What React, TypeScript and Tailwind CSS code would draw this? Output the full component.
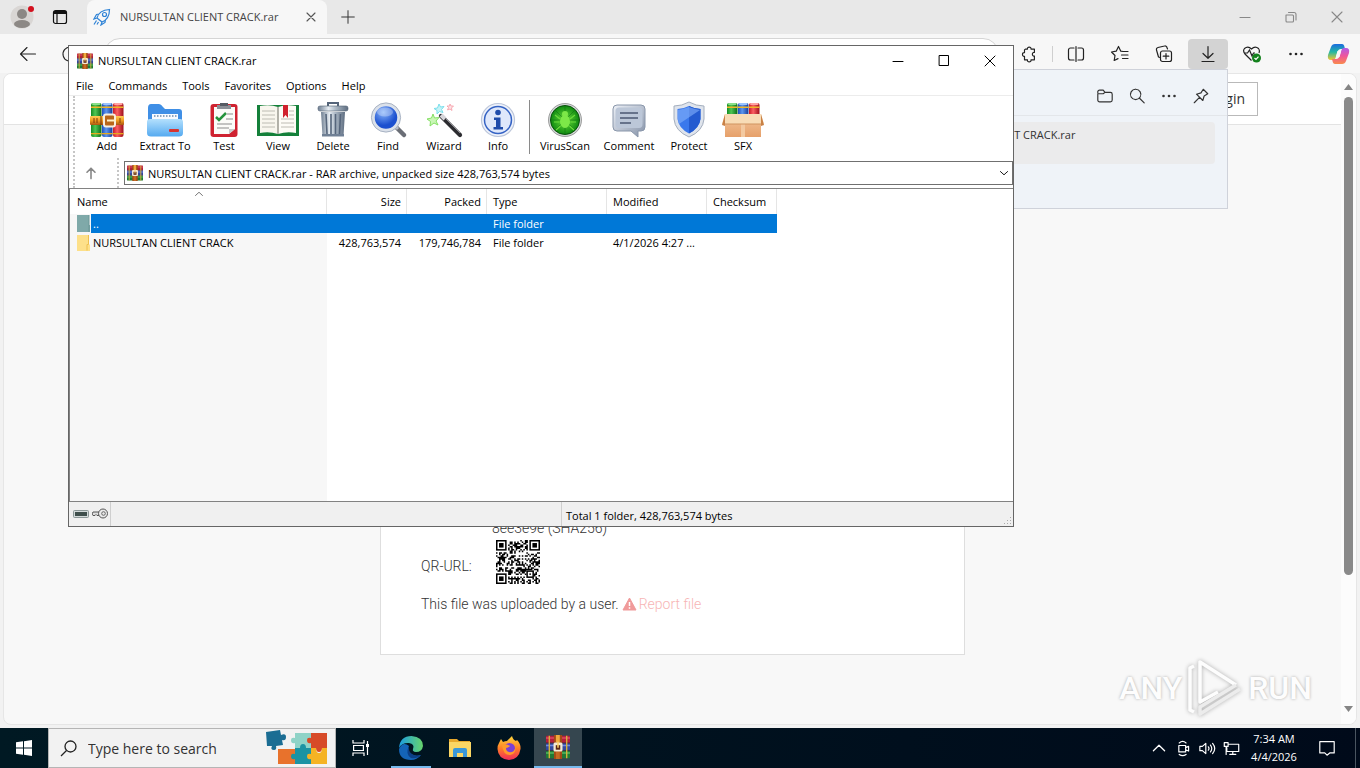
import { ReactNode } from 'react'

const FILE_NAME = 'NURSULTAN CLIENT CRACK.rar'

// Thin line icon on a 20x20 grid
function Line({ d, size = 20, className = '', w = 1.1 }: { d: string; size?: number; className?: string; w?: number }) {
    return (
        <svg width={size} height={size} viewBox="0 0 20 20" fill="none" stroke="currentColor" strokeWidth={w} strokeLinecap="round" strokeLinejoin="round" className={className} aria-hidden="true">
            <path d={d} />
        </svg>
    )
}

const PATHS = {
    close: 'M5 5 15 15M15 5 5 15',
    plus: 'M10 3V17M3 10H17',
    minus: 'M5 10.500H15',
    back: 'M17.500 10H2.500M9 3.500 2.500 10 9 16.500',
    refresh: 'M16 6.500A7 7 0 1 0 17 10M16.500 2.500V6.500H12.500',
    puzzle: 'M6 4.500H8.300C7.500 1.600 13 1.600 12.200 4.500H16V8.300C13 7.500 13 13 16 12.200V16.500H12.200C13 19.400 7.500 19.400 8.300 16.500H5V12.500C2 13.200 2 7.700 5 8.500V5.500Z',
    split: 'M8 4H4.500A2 2 0 0 0 2.500 6V14A2 2 0 0 0 4.500 16H8M12 4H15.500A2 2 0 0 1 17.500 6V14A2 2 0 0 1 15.500 16H12M10 2.500V17.500',
    star: 'M13 7.500 10.800 7.200 8.500 2.500 6.200 7.200 1.500 8 5 11.500 4.200 16.500 8 14.600M12.500 7.500H18M11.500 11H18M12.500 14.500H18',
    collections: 'M6 13.500 4.500 13 2.500 6A2 2 0 0 1 4 3.500L10.500 2A2 2 0 0 1 13 3.500L13.500 5M8.500 7H15.500A2 2 0 0 1 17.500 9V15.500A2 2 0 0 1 15.500 17.500H8.500A2 2 0 0 1 6.500 15.500V9A2 2 0 0 1 8.500 7M12 9.500V15M9.200 12.200H14.800',
    download: 'M10 2.500V14M5 9.500 10 14.300 15 9.500M4 17.500H16',
    folder: 'M2 6.500V5A2 2 0 0 1 4 3.500H8L10 6H16A2 2 0 0 1 18 8V14.500A2 2 0 0 1 16 16.500H4A2 2 0 0 1 2 14.500V7.500H8L10 6',
    search: 'M8.500 2.500A5.800 5.800 0 1 0 8.510 2.500M12.800 12.500 18 17.700',
    pin: 'M12.500 2.500 17.500 7.500 13.500 10 12 15 5 8 10 6.500ZM8.300 11.600 2.500 17.500',
    up: 'M10 17V4M5 9 10 4 15 9',
    down: 'M4 7.500 10 13 16 7.500',
    sort: 'M3 13 10 6.500 17 13',
}

function Dots() {
    return (
        <svg width="20" height="20" viewBox="0 0 20 20" fill="currentColor" aria-hidden="true">
            <circle cx="4.500" cy="10" r="1.300" />
            <circle cx="10" cy="10" r="1.300" />
            <circle cx="15.500" cy="10" r="1.300" />
        </svg>
    )
}

// Three stacked books tied with a belt
function RarIcon({ size = 16 }: { size?: number }) {
    return (
        <svg width={size} height={size} viewBox="0 0 16 16" aria-hidden="true">
            <rect width="16" height="5" y="0.500" rx="0.500" fill="#b3203c" />
            <rect width="16" height="1" y="1.500" fill="#dc4a62" />
            <rect width="16" height="5" y="5.500" fill="#3349a0" />
            <rect width="16" height="1" y="6.500" fill="#6f8ae0" />
            <rect width="16" height="5" y="10.500" rx="0.500" fill="#1f7a35" />
            <rect width="16" height="1" y="11.500" fill="#55b85f" />
            <path d="M0 5.300H16M0 10.300H16" stroke="#3c2a38" strokeWidth="0.500" />
            <path d="M2.200 0.500V15.500M13.800 0.500V15.500" stroke="#d9b23b" strokeWidth="0.900" />
            <rect x="5.300" width="5.400" height="16" fill="#a34a16" />
            <rect x="6.600" width="2.600" height="5" fill="#f0a93d" />
            <rect x="6.600" y="11" width="2.600" height="5" fill="#c46a22" />
            <rect x="5" y="5" width="6" height="6" rx="1" fill="#f4e9d2" />
            <rect x="6.500" y="6.800" width="3" height="3" fill="#5b2716" />
            <rect x="7.500" y="4.500" width="1" height="4" fill="#ffd46a" />
        </svg>
    )
}

function Books({ y = 0, h = 34 }: { y?: number; h?: number }) {
    const books = [
        ['url(#bookGreen)', '#8ae08a'],
        ['url(#bookBlue)', '#9cc4ff'],
        ['url(#bookRed)', '#ffa3a3'],
    ]
    return (
        <g>
            {books.map(([fill, shine], i) => (
                <g key={i} transform={`translate(${2 + i * 11} ${y})`}>
                    <rect width="10.500" height={h} rx="2" fill={fill} />
                    <rect x="1" width="8.500" height="2" rx="1" fill={shine} />
                    <rect y="3.500" width="10.500" height="1.500" fill="#f0b429" />
                    {h > 20 && <rect y={h - 4} width="10.500" height="1.300" fill="#e6a91f" />}
                </g>
            ))}
        </g>
    )
}

function Defs() {
    return (
        <svg width="0" height="0" className="absolute" aria-hidden="true">
            <defs>
                <linearGradient id="bookGreen"><stop offset="0" stopColor="#128b22" /><stop offset=".4" stopColor="#4fc653" /><stop offset="1" stopColor="#0c6a19" /></linearGradient>
                <linearGradient id="bookBlue"><stop offset="0" stopColor="#1e4fbd" /><stop offset=".4" stopColor="#5d97ee" /><stop offset="1" stopColor="#173c99" /></linearGradient>
                <linearGradient id="bookRed"><stop offset="0" stopColor="#c81a26" /><stop offset=".4" stopColor="#fa5f63" /><stop offset="1" stopColor="#9e0f1c" /></linearGradient>
                <linearGradient id="gold" x2="0" y2="1"><stop offset="0" stopColor="#ffcf57" /><stop offset=".5" stopColor="#ef9a22" /><stop offset="1" stopColor="#a85510" /></linearGradient>
                <linearGradient id="sky" x2="0" y2="1"><stop offset="0" stopColor="#b4e0fd" /><stop offset="1" stopColor="#55aaf0" /></linearGradient>
                <linearGradient id="steel"><stop offset="0" stopColor="#6f7f92" /><stop offset=".35" stopColor="#e6ecf2" /><stop offset=".6" stopColor="#aab7c4" /><stop offset="1" stopColor="#5e6d80" /></linearGradient>
                <radialGradient id="lens" cx=".4" cy=".3"><stop offset="0" stopColor="#86b4fb" /><stop offset="1" stopColor="#1c50cf" /></radialGradient>
                <radialGradient id="radar"><stop offset="0" stopColor="#6fe03d" /><stop offset="1" stopColor="#0e8a10" /></radialGradient>
                <linearGradient id="silver" x2="1" y2="1"><stop offset="0" stopColor="#eef2f8" /><stop offset="1" stopColor="#8592a8" /></linearGradient>
                <linearGradient id="box" x2="0" y2="1"><stop offset="0" stopColor="#f3c79d" /><stop offset="1" stopColor="#e6a06a" /></linearGradient>
                <linearGradient id="edgeTop"><stop offset="0" stopColor="#1b9de2" /><stop offset="1" stopColor="#67d56b" /></linearGradient>
                <linearGradient id="fox" x2="0" y2="1"><stop offset="0" stopColor="#ffd83c" /><stop offset=".5" stopColor="#ff7f26" /><stop offset="1" stopColor="#f02c5a" /></linearGradient>
                <linearGradient id="copA" x2="0" y2="1"><stop offset="0" stopColor="#1a6be0" /><stop offset=".5" stopColor="#23b8a2" /><stop offset="1" stopColor="#f5c52f" /></linearGradient>
                <linearGradient id="copB" x2="0" y2="1"><stop offset="0" stopColor="#b05be8" /><stop offset=".5" stopColor="#f0569a" /><stop offset="1" stopColor="#f98b4c" /></linearGradient>
            </defs>
        </svg>
    )
}

const TOOL_ICONS: Record<string, ReactNode> = {
    Add: (
        <>
            <Books y={1} />
            <rect x="1" y="14" width="34" height="9" rx="1" fill="url(#gold)" />
            <path d="M12 14V23M24 14V23" stroke="#6e3208" strokeWidth="1" />
            <rect x="15" y="12.500" width="11" height="12" rx="2" fill="#b8661a" stroke="#f7efe0" strokeWidth="2" />
            <path d="M18 18.500H27" stroke="#fff1c5" strokeWidth="2" />
            <path d="M5 16V21M8 16V21M31 16V21" stroke="#7d3d09" />
        </>
    ),
    'Extract To': (
        <>
            <path d="M1 6Q1 2 4 2H12Q14 2 16 5L18 7H32Q35 7 35 10V28H1Z" fill="#3f8fe6" />
            <path d="M5 12H31V22H5Z" fill="#f8fbff" />
            <path d="M7 14H30" stroke="#8fa6c0" strokeWidth="2" strokeDasharray="1.500 1.500" />
            <path d="M0 20Q0 17 3 17H33Q36 17 36 20V31Q36 34.500 32 34.500H4Q0 34.500 0 31Z" fill="url(#sky)" />
            <rect x="22" y="27" width="10" height="3" rx="1" fill="#d8342f" />
        </>
    ),
    Test: (
        <>
            <rect x="4.500" y="2" width="27" height="33" rx="3" fill="#cf2230" />
            <path d="M8 5H29V27L23 32H8Z" fill="#fbfbf8" />
            <path d="M29 27H23V32Z" fill="#c9c9c9" />
            <path d="M11 3H25V7H11Z" fill="#8a8f96" />
            <path d="M14 1H22V4H14Z" fill="#555b63" />
            <path d="M10 15 13 18 20 11" fill="none" stroke="#25933c" strokeWidth="2.500" />
            <path d="M21 12H27M20 17H27M11 22H26M11 26H23" stroke="#8b8b8b" />
        </>
    ),
    View: (
        <>
            <path d="M-3 3H39V34H-3Z" fill="#14803a" />
            <path d="M0 4Q10 2 18 5V32Q9 29 0 31Z" fill="#f8f6ee" />
            <path d="M36 4Q26 2 18 5V32Q27 29 36 31Z" fill="#fdfcf6" />
            <path d="M18 5V32" stroke="#9a9a90" strokeWidth="1.500" />
            <path d="M2 9H15M2 13H15M2 17H15M2 21H15M2 25H15M21 17H34M21 21H34M21 25H34M29 9H34M29 13H34" stroke="#b7b5ac" strokeWidth="0.900" />
            <path d="M23 3H28V16L25.500 13 23 16Z" fill="#d0212d" />
        </>
    ),
    Delete: (
        <>
            <path d="M13 4V1H23V4" fill="none" stroke="#55657a" strokeWidth="2" />
            <rect x="3" y="4" width="30" height="5" rx="2" fill="url(#steel)" stroke="#536173" strokeWidth=".6" />
            <path d="M6 10H30L28.500 34H7.500Z" fill="url(#steel)" />
            <path d="M11 12 12 32M16 12V32M20.500 12V32M25.500 12 24.500 32" stroke="#56667c" strokeWidth="1.600" />
            <path d="M7 32H29V34.500H7Z" fill="#708095" />
        </>
    ),
    Find: (
        <>
            <path d="M26 25 34 33" stroke="#6a6e76" strokeWidth="4.500" strokeLinecap="round" />
            <path d="M24 23 28 27" stroke="#b7bcc6" strokeWidth="3" />
            <circle cx="16" cy="15.500" r="13" fill="url(#lens)" stroke="#dbe1ea" strokeWidth="3.500" />
            <circle cx="16" cy="15.500" r="14.600" fill="none" stroke="#8f9cb0" strokeWidth=".7" />
            <ellipse cx="15" cy="10" rx="8" ry="4.500" fill="#fff" opacity=".3" />
        </>
    ),
    Wizard: (
        <>
            <path d="M15 14 34 33" stroke="#2c2c30" strokeWidth="4.200" strokeLinecap="round" />
            <path d="M15 13 19 17" stroke="#d6d6da" strokeWidth="4" />
            <path d="M20 17 34 31" stroke="#8a8a90" strokeWidth="1" />
            <path d="M7 12 8.500 16 13 15.500 10 19 12 23 8 21 4 24 4.500 19.500 1 17 5.500 16Z" fill="#c9f7b5" stroke="#86e065" />
            <path d="M13 2 14.500 5 18 4.500 15.500 7.500 17 10.500 13.500 9.500 11 12 11 8.500 8 6.500 11.500 6Z" fill="#c6f3f7" stroke="#7adfec" />
            <path d="M24 2 25 4 27.500 4 25.500 6 26 8.500 24 7 21.500 8 22.500 5.500 21 4 23.500 4Z" fill="#ffe1e4" stroke="#f59aa4" strokeWidth=".8" />
        </>
    ),
    Info: (
        <>
            <circle cx="18" cy="18" r="16.500" fill="#eef2fb" stroke="#bcc6da" strokeWidth="1.200" />
            <circle cx="18" cy="18" r="13.500" fill="#dfe8fb" stroke="#3563c4" strokeWidth="1.500" />
            <circle cx="18" cy="10.500" r="2.800" fill="#1f4cab" />
            <path d="M14 15.500H20.500V25H23V27.500H13.500V25H16V18H14Z" fill="#1f4cab" />
        </>
    ),
    VirusScan: (
        <>
            <circle cx="18" cy="18" r="16.500" fill="#d3d7d7" stroke="#8a8a8a" strokeWidth=".8" />
            <circle cx="18" cy="18" r="14.500" fill="url(#radar)" stroke="#0a4f0c" />
            <path d="M18 4V32M4 18H32M8 8 28 28M28 8 8 28" stroke="#0d6a10" strokeWidth=".7" opacity=".7" />
            <ellipse cx="18" cy="19.500" rx="5" ry="6.500" fill="#7de848" />
            <circle cx="18" cy="12" r="3" fill="#7de848" />
            <path d="M13 17 8 13M12.500 20H7M13.500 24 9 28M23 17 28 13M23.500 20H29M22.500 24 27 28" stroke="#6cdc3c" strokeWidth="1.200" />
        </>
    ),
    Comment: (
        <>
            <path d="M6 3H30Q34 3 34 7V25Q34 29 30 29H27V35L20 29H6Q2 29 2 25V7Q2 3 6 3Z" fill="url(#silver)" stroke="#8996aa" />
            <path d="M8 5.500H28Q31.500 5.500 31.500 9V22Q31.500 26 28 26H8Q4.500 26 4.500 22V9Q4.500 5.500 8 5.500Z" fill="#bcc7d8" />
            <path d="M9 11H27M9 16H27M9 21H20" stroke="#4b5872" strokeWidth="1.500" />
        </>
    ),
    Protect: (
        <>
            <path d="M18 0Q25 4 33 4V17Q32 29 18 35Q4 29 3 17V4Q11 4 18 0Z" fill="#dfe4ec" stroke="#a3aebe" />
            <path d="M18 4Q24 7 29.500 7V17Q28.500 26 18 31.500Q7.500 26 6.500 17V7Q12 7 18 4Z" fill="#3a78ec" />
            <path d="M18 4Q24 7 29.500 7V17Q28.500 26 18 31.500Z" fill="#245bd0" />
            <path d="M7 8Q13 7 18 5Q23 7 29 8L8 22Q6.500 18 7 8Z" fill="#84b1fc" opacity=".6" />
        </>
    ),
    SFX: (
        <>
            <Books y={1} h={14} />
            <path d="M0 12H36V35H0Z" fill="url(#box)" />
            <path d="M0 12-3 22H39L36 12Z" fill="#f8dcb6" />
            <path d="M0 12-3 23 0 24ZM36 12 39 23 36 24Z" fill="#c98146" />
            <path d="M16 22H20V35H16Z" fill="#f3c9a0" />
            <path d="M0 22H36" stroke="#d09460" />
        </>
    ),
}

const TOOLS = [
    { label: 'Add', width: 'w-[52px]' },
    { label: 'Extract To', width: 'w-[64px]' },
    { label: 'Test', width: 'w-[54px]' },
    { label: 'View', width: 'w-[54px]' },
    { label: 'Delete', width: 'w-[56px]' },
    { label: 'Find', width: 'w-[54px]' },
    { label: 'Wizard', width: 'w-[58px]' },
    { label: 'Info', width: 'w-[50px]' },
]

const EXTRA_TOOLS = [
    { label: 'VirusScan', width: 'w-[64px]' },
    { label: 'Comment', width: 'w-[64px]' },
    { label: 'Protect', width: 'w-[56px]' },
    { label: 'SFX', width: 'w-[52px]' },
]

function ToolButton({ label, width }: { label: string; width: string }) {
    return (
        <button className={`flex flex-col items-center whitespace-nowrap pt-1.5 ${width}`}>
            <svg width="36" height="36" viewBox="0 0 36 36" className="overflow-visible" aria-hidden="true">{TOOL_ICONS[label]}</svg>
            <span className="leading-4">{label}</span>
        </button>
    )
}

function TabStrip() {
    return (
        <div className="flex h-[34px] shrink-0 items-center bg-[#e8e8e8]">
            <button aria-label="Profile" className="ml-2.5 w-6">
                <svg width="24" height="24" viewBox="0 0 24 24">
                    <circle cx="12" cy="12" r="11.500" fill="#d9d6d4" />
                    <circle cx="12" cy="9" r="5" fill="#8c8885" />
                    <ellipse cx="12" cy="19" rx="8" ry="4" fill="#8c8885" />
                    <circle cx="21" cy="4" r="3" fill="#d3111f" />
                </svg>
            </button>
            <button aria-label="Tab actions" className="ml-[18px] w-4">
                <svg width="16" height="16" viewBox="0 0 16 16" fill="none" stroke="#111" strokeWidth="1.200">
                    <rect x="1.500" y="1.500" width="13" height="13" rx="2" />
                    <path d="M1.500 4.500H14.500M5 4.500V14.500" />
                    <path d="M2 3H14" strokeWidth="2" />
                </svg>
            </button>
            <div className="ml-[19px] flex h-full w-60 items-center rounded-t-lg bg-[#f7f7f7] pl-1.5 pr-2">
                <svg width="18" height="18" viewBox="0 0 18 18" fill="none" stroke="#2f83d6" strokeWidth="1.200">
                    <path d="M4 10Q6 2 16.500 1.500Q16.500 11 9 14ZM4 10 1 11 3.500 6.500 6 6M9 14 8 17 12 14.500 12.500 11.500M3.500 12.500 1 16.500M5.500 14 4 16.500" />
                    <circle cx="11.500" cy="6.500" r="2" />
                </svg>
                <span className="ml-[9px] flex-1 whitespace-nowrap text-[#444]">{FILE_NAME}</span>
                <button aria-label="Close tab" className="text-[#555]"><Line d={PATHS.close} size={16} w={1.4} /></button>
            </div>
            <button aria-label="New tab" className="ml-3 text-[#333]"><Line d={PATHS.plus} size={18} /></button>
            <div className="ml-auto flex text-[#888]">
                <button aria-label="Minimize browser" className="flex w-[46px] justify-center"><Line d={PATHS.minus} /></button>
                <button aria-label="Restore browser" className="flex w-[46px] justify-center">
                    <Line d="M5 8H11.500A1 1 0 0 1 12.500 9V14A1 1 0 0 1 11.500 15H6A1 1 0 0 1 5 14ZM7.500 5.500H13Q15 5.500 15 7.500V13" />
                </button>
                <button aria-label="Close browser" className="flex w-[46px] justify-center"><Line d={PATHS.close} /></button>
            </div>
        </div>
    )
}

function BarButton({ label, children, active = false }: { label: string; children: ReactNode; active?: boolean }) {
    return (
        <button aria-label={label} className={`flex h-[30px] w-10 shrink-0 items-center justify-center rounded-sm ${active ? 'bg-[#d3d3d3]' : ''}`}>
            {children}
        </button>
    )
}

function BrowserBar() {
    return (
        <div className="flex h-[39px] shrink-0 items-center bg-[#f7f7f7] pr-1 text-[#222]">
            <div className="flex gap-0.5 pl-2">
                <BarButton label="Back"><Line d={PATHS.back} /></BarButton>
                <BarButton label="Refresh"><Line d={PATHS.refresh} /></BarButton>
            </div>
            <input aria-label="Address" className="ml-3.5 h-8 min-w-0 flex-1 rounded-full border border-[#d5d5d5] bg-white px-4" />
            <div className="ml-2.5 flex items-center gap-1">
                <BarButton label="Extensions"><Line d={PATHS.puzzle} size={18} w={1.3} /></BarButton>
                <div className="-ml-px -mr-px h-4 w-px bg-[#cfcfcf]" />
                <BarButton label="Split screen"><Line d={PATHS.split} w={1.2} /></BarButton>
                <BarButton label="Favorites"><Line d={PATHS.star} w={1.2} /></BarButton>
                <BarButton label="Collections"><Line d={PATHS.collections} w={1.2} /></BarButton>
                <BarButton label="Downloads" active><Line d={PATHS.download} w={1.2} /></BarButton>
                <BarButton label="Browser essentials">
                    <svg width="20" height="20" viewBox="0 0 20 20" fill="none" stroke="currentColor" strokeWidth="1.200">
                        <path d="M9.500 16.500 3 10Q.5 7 2.500 4.500Q6 1.500 9.500 5Q13 1.500 16.500 4.500Q18 6.500 17 9M2 9H5.500L7.500 6 10 12 11.500 9H13" />
                        <circle cx="14.500" cy="14" r="4.500" fill="#13811c" stroke="none" />
                        <path d="M12.500 14 14 15.500 16.500 12.700" stroke="#fff" />
                    </svg>
                </BarButton>
                <BarButton label="Settings and more"><Dots /></BarButton>
                <button aria-label="Copilot" className="flex w-9 justify-center">
                    <svg width="23" height="22" viewBox="0 0 23 22">
                        <path d="M8 1H15Q17 1 17.500 4L18 6H14Q11 6 10 10L8.500 15Q8 17 6 17H4Q0 17 1 12L4 4Q5 1 8 1Z" fill="url(#copA)" />
                        <path d="M15 21H8Q6 21 5.500 18L5 16H9Q12 16 13 12L14.500 7Q15 5 17 5H19Q23 5 22 10L19 18Q18 21 15 21Z" fill="url(#copB)" />
                        <path d="M10.500 8H14L12.500 14H9Z" fill="#f7f7f7" />
                    </svg>
                </button>
            </div>
        </div>
    )
}

function QrCode() {
    const n = 29
    const cells: string[] = []
    let seed = 41
    const inFinder = (x: number, y: number) => (x < 8 && y < 8) || (x > n - 9 && y < 8) || (x < 8 && y > n - 9)
    for (let y = 0; y < n; y++) {
        for (let x = 0; x < n; x++) {
            seed = (seed * 1103515245 + 12345) % 2147483648
            const align = x > 19 && x < 25 && y > 19 && y < 25
            if (!inFinder(x, y) && !align && (seed >> 12) % 2) cells.push(`M${x} ${y}h1v1h-1z`)
        }
    }
    const corners = [[0, 0], [n - 7, 0], [0, n - 7]]
    return (
        <svg width="44" height="44" viewBox={`0 0 ${n} ${n}`} role="img" aria-label="QR code">
            <path d={cells.join('')} fill="#000" />
            {corners.map(([x, y]) => (
                <g key={`${x}-${y}`}>
                    <rect x={x + 0.5} y={y + 0.5} width="6" height="6" fill="#fff" stroke="#000" />
                    <rect x={x + 2} y={y + 2} width="3" height="3" />
                </g>
            ))}
            <rect x="20.500" y="20.500" width="4" height="4" fill="#fff" stroke="#000" />
            <rect x="22" y="22" width="1" height="1" />
        </svg>
    )
}

function WebPage() {
    return (
        <div className="mx-[3px] mb-[3px] flex min-h-0 flex-1 overflow-hidden rounded-lg border border-[#e6e6e6] bg-[#f8f8f8]">
            <div className="flex min-w-0 flex-1 flex-col">
                <header className="flex h-[51px] shrink-0 items-center justify-end border-b border-[#e3e3e3] bg-white pr-[83px]">
                    <a href="#login" className="border border-[#b9b9b9] px-3 py-1.5 text-sm leading-5 text-[#333]">Login</a>
                </header>
                <main className="mx-auto mb-[69px] mt-6 flex min-h-0 w-[585px] flex-1 flex-col justify-end border border-[#dedede] bg-white px-10 pb-[38px] font-['Roboto',sans-serif] text-sm font-light leading-6 text-[#333]">
                    <div className="pl-[71px]">8ee3e9e (SHA256)</div>
                    <div className="flex items-end gap-6">
                        <span className="pb-1.5">QR-URL:</span>
                        <QrCode />
                    </div>
                    <p className="mt-2 flex items-center">
                        This file was uploaded by a user.
                        <a href="#report" className="ml-[3px] flex items-center gap-0.5 text-[#f7b5b5]">
                            <svg width="15" height="14" viewBox="0 0 15 14" aria-hidden="true">
                                <path d="M7.500 1 14 13H1Z" fill="#f09a9a" stroke="#f09a9a" strokeLinejoin="round" />
                                <path d="M7.500 5V9M7.500 10.300V11.700" stroke="#fff" strokeWidth="1.500" />
                            </svg>
                            Report file
                        </a>
                    </p>
                </main>
            </div>
            <div className="flex w-[15px] flex-col items-center bg-[#fcfcfc] pb-3 pt-2.5">
                <svg width="9" height="6" viewBox="0 0 9 6" fill="#858585"><path d="M0 6 4.500 0 9 6Z" /></svg>
                <div className="mb-1 mt-[7px] flex w-full flex-1 justify-center">
                    <div className="h-[79%] w-[9px] rounded-full bg-[#8a8a8a]" />
                </div>
                <svg width="9" height="6" viewBox="0 0 9 6" fill="#858585"><path d="M0 0 4.500 6 9 0Z" /></svg>
            </div>
        </div>
    )
}

function DownloadsFlyout() {
    return (
        <div className="absolute right-[132px] top-[69px] flex h-[140px] w-[364px] flex-col border border-[#cfd2da] bg-[#eff3f8]">
            <div className="flex h-[46px] items-center justify-end border-b border-[#e3e6ea] pr-2.5 pt-1.5 text-[#333]">
                <button aria-label="Open downloads folder" className="flex w-8 justify-center"><Line d={PATHS.folder} size={18} w={1.3} /></button>
                <button aria-label="Search downloads" className="flex w-8 justify-center"><Line d={PATHS.search} size={18} w={1.3} /></button>
                <button aria-label="More options" className="flex w-8 justify-center"><Dots /></button>
                <button aria-label="Pin downloads" className="flex w-8 justify-center"><Line d={PATHS.pin} size={18} w={1.3} /></button>
            </div>
            <div className="mx-3 mt-1.5 h-[42px] rounded-sm bg-[#ebebec] pl-10 pt-[5px] text-[#333]">{FILE_NAME}</div>
        </div>
    )
}

const COLUMNS = ['Name', 'Size', 'Packed', 'Type', 'Modified', 'Checksum']

function FileTable() {
    return (
        <table className="w-[707px] table-fixed border-separate border-spacing-0 text-left">
            <colgroup>
                <col className="w-[257px]" />
                <col className="w-[80px]" />
                <col className="w-[80px]" />
                <col className="w-[120px]" />
                <col className="w-[100px]" />
                <col className="w-[70px]" />
            </colgroup>
            <thead>
                <tr className="h-[25px] bg-white">
                    {COLUMNS.map((c, i) => (
                        <th key={c} className={`relative border-r border-[#e5e5e5] p-0 font-normal ${i === 0 ? 'pl-[7px]' : 'pl-1.5'} ${i === 1 || i === 2 ? 'pr-[5px] text-right' : ''}`}>
                            {c}
                            {i === 0 && <Line d={PATHS.sort} size={10} w={2} className="absolute left-1/2 top-0 -ml-1 text-[#777]" />}
                        </th>
                    ))}
                </tr>
            </thead>
            <tbody>
                <tr className="h-[19px] text-white">
                    <td className="bg-[linear-gradient(to_right,transparent_21px,#0078d7_21px)] p-0">
                        <div className="flex items-center pl-[7px]">
                            <svg width="14" height="17" viewBox="0 0 14 17"><path d="M0 0H12V10H13V17H0Z" fill="#7fa9a9" /><path d="M12 0V17" stroke="#6b9696" /></svg>
                            <span className="pl-0.5">..</span>
                        </div>
                    </td>
                    <td className="bg-[#0078d7]" />
                    <td className="bg-[#0078d7]" />
                    <td className="bg-[#0078d7] p-0 pl-1.5">File folder</td>
                    <td className="bg-[#0078d7]" />
                    <td className="bg-[#0078d7]" />
                </tr>
                <tr className="h-[19px]">
                    <td className="p-0">
                        <div className="flex items-center pl-[7px]">
                            <svg width="14" height="16" viewBox="0 0 14 16"><path d="M0 0H12V9L13 10V16H0Z" fill="#fde08a" /><path d="M11.500 0V9.500H10V15.500" fill="none" stroke="#eec04f" /></svg>
                            <span className="pl-0.5">NURSULTAN CLIENT CRACK</span>
                        </div>
                    </td>
                    <td className="p-0 pr-1.5 text-right">428,763,574</td>
                    <td className="p-0 pr-1.5 text-right">179,746,784</td>
                    <td className="p-0 pl-1.5">File folder</td>
                    <td className="whitespace-nowrap p-0 pl-1.5">4/1/2026 4:27 ...</td>
                    <td />
                </tr>
            </tbody>
        </table>
    )
}

function ArchiveWindow() {
    return (
        <section className="absolute bottom-[241px] left-[68px] right-[346px] top-[45px] flex flex-col border border-[#666] bg-white text-black">
            <div className="flex h-[30px] shrink-0 items-center pl-2">
                <RarIcon />
                <h1 className="ml-[5px] flex-1">{FILE_NAME}</h1>
                <button aria-label="Minimize" className="flex w-[46px] justify-center"><Line d={PATHS.minus} w={1} /></button>
                <button aria-label="Maximize" className="flex w-[46px] justify-center"><Line d="M5.500 4.500H14.500V14.500H5.500Z" w={1} /></button>
                <button aria-label="Close" className="flex w-[46px] justify-center"><Line d={PATHS.close} w={1} /></button>
            </div>
            <nav className="flex h-5 shrink-0 items-center gap-px border-b border-[#ececec]">
                {['File', 'Commands', 'Tools', 'Favorites', 'Options', 'Help'].map((m) => (
                    <button key={m} className="px-[7px]">{m}</button>
                ))}
            </nav>
            <div className="flex shrink-0 pl-1">
                <div className="w-2 border-l-2 border-dotted border-[#c6c6c6]" />
                <div className="flex min-w-0 flex-1 flex-col">
                    <div className="flex h-[62px]">
                        {TOOLS.map((t) => <ToolButton key={t.label} {...t} />)}
                        <div className="mb-1 ml-1.5 mr-[3px] mt-1 w-px bg-[#8a8a8a]" />
                        {EXTRA_TOOLS.map((t) => <ToolButton key={t.label} {...t} />)}
                    </div>
                    <div className="flex h-[30px] items-center">
                        <button aria-label="Up one level" className="w-9 text-[#888]"><Line d={PATHS.up} size={16} w={2} className="ml-0.5" /></button>
                        <div className="h-full w-[7px] border-l-2 border-dotted border-[#c6c6c6]" />
                        <div className="relative h-6 flex-1">
                            <select aria-label="Archive path" className="h-full w-full appearance-none border border-[#707070] bg-white pl-[23px] pt-px">
                                <option>{FILE_NAME} - RAR archive, unpacked size 428,763,574 bytes</option>
                            </select>
                            <div className="pointer-events-none absolute inset-0 flex items-center justify-between px-[3px]">
                                <RarIcon />
                                <Line d={PATHS.down} size={12} w={1.5} />
                            </div>
                        </div>
                    </div>
                </div>
            </div>
            <div className="min-h-0 flex-1 border-b border-l border-t border-[#828282] bg-[linear-gradient(to_right,#f7f7f7_257px,white_257px)]">
                <div className="bg-[linear-gradient(white,white)] bg-[length:100%_25px] bg-no-repeat">
                    <FileTable />
                </div>
            </div>
            <footer className="flex h-6 shrink-0 items-center bg-[#f0f0f0]">
                <div className="flex h-full w-[42px] items-center gap-[3px] border-r border-[#cfcfcf] pl-1">
                    <svg width="16" height="8" viewBox="0 0 16 8"><rect x=".5" y=".5" width="15" height="7" rx="1" fill="#d3dada" stroke="#8b9797" /><rect x="2" y="2" width="12" height="4" fill="#3f4f4c" /></svg>
                    <svg width="16" height="12" viewBox="0 0 16 12" fill="none"><path d="M8 4H1L0 6 1 7.500H3L4 6.500 5 7.500H8" fill="#ddd" stroke="#555" /><circle cx="11" cy="5.500" r="4.500" fill="#e9e9e9" stroke="#555" /><circle cx="11.500" cy="5.500" r="1.800" stroke="#666" /></svg>
                </div>
                <div className="h-full w-[451px] border-r border-[#cfcfcf]" />
                <span className="flex-1 pl-1 pt-1">Total 1 folder, 428,763,574 bytes</span>
                <svg width="10" height="10" viewBox="0 0 10 10" fill="#aaa" className="self-end"><path d="M7 1h1v1H7zM4 4h1v1H4zM7 4h1v1H7zM1 7h1v1H1zM4 7h1v1H4zM7 7h1v1H7z" /></svg>
            </footer>
        </section>
    )
}

function Watermark() {
    return (
        <div className="pointer-events-none absolute bottom-12 right-12 flex items-center gap-1 font-['Roboto',sans-serif] text-[32px] font-medium leading-[64px] text-[#fdfdfd] [text-shadow:0_0_3px_#aaa]">
            <span>ANY</span>
            <svg width="58" height="64" viewBox="0 0 58 64" fill="none" stroke="#fdfdfd" strokeWidth="3.500" strokeLinejoin="round" className="drop-shadow-[0_0_2px_#aaa]">
                <path d="M50 29 14 6V46L32 36" />
                <path d="M8 10 4 12V54L8 56" />
                <path d="M54 33 14 58V51L50 29" stroke="#ececec" />
            </svg>
            <span>RUN</span>
        </div>
    )
}

function Puzzle() {
    return (
        <svg width="64" height="38" viewBox="0 0 64 38" aria-hidden="true">
            <path d="M1 3 15 1 16 6Q21 4 21 8Q21 12 17 11L18 16 11 17Q12 21 9 21Q5 21 7 17L2 17Z" fill="#1b6d93" />
            <path d="M30 4H46V19H30V14Q26 15 26 11Q26 8 30 9Z" fill="#8fd3c7" />
            <path d="M46 4H62V19H57Q57 23 54 23Q51 23 51 19H46V14Q42 15 42 11Q42 8 46 9Z" fill="#d74a28" />
            <path d="M13 20H30V35H13Z" fill="#e8722c" />
            <path d="M30 19H35Q35 15 38 15Q41 15 41 19H46V35H30V30Q26 31 26 27Q26 24 30 25Z" fill="#1b93a3" />
            <path d="M46 19H51Q51 24 54 24Q57 24 57 19H62V35H46V30Q42 31 42 27Q42 24 46 25Z" fill="#f5b324" />
        </svg>
    )
}

function Taskbar() {
    return (
        <footer className="flex h-10 shrink-0 items-center bg-[linear-gradient(to_right,#001923,#000a1a)] text-white">
            <button aria-label="Start" className="flex h-full w-12 items-center justify-center">
                <svg width="16" height="16" viewBox="0 0 16 16" fill="#fff"><path d="M0 2.300 7 1.300V7.500H0ZM8 1.200 16 0V7.500H8ZM0 8.500H7V14.700L0 13.700ZM8 8.500H16V16L8 14.800Z" /></svg>
            </button>
            <label className="flex h-full w-72 items-center border border-[#b5b5b5] bg-[#f2f2f2] pl-[11px] pr-1.5 text-[#222]">
                <svg width="17" height="17" viewBox="0 0 17 17" fill="none" stroke="currentColor" strokeWidth="1.300"><circle cx="10.500" cy="6.500" r="5.500" /><path d="M6.500 10.500 1 16" /></svg>
                <input type="search" aria-label="Search" placeholder="Type here to search" className="ml-[11px] min-w-0 flex-1 pt-px text-sm placeholder:text-[#333]" />
                <Puzzle />
            </label>
            <button aria-label="Task view" className="flex h-full w-[50px] items-center justify-center">
                <svg width="18" height="16" viewBox="0 0 18 16" fill="none" stroke="#fff" strokeWidth="1.200"><path d="M1 0V3H12V0M1 16V13H12V16M1.600 5.500H11.400V10.500H1.600ZM15.500 1V15" /><path d="M14 4H17V7H14Z" fill="#fff" stroke="none" /></svg>
            </button>
            <button aria-label="Microsoft Edge" className="ml-[5px] flex h-full w-10 items-center justify-center border-b-2 border-[#76b9ed] pt-0.5">
                <svg width="24" height="24" viewBox="0 0 24 24">
                    <path d="M0 13Q0 24 12 24Q18 24 22 19Q16 21 12 18Q8 14 10 10Q4 5 0 13Z" fill="#1464b8" />
                    <path d="M0 12Q1 0 12.500 0Q24 1 24 10Q23 16 17 16Q13 15.500 14 13Q16 8 10 7Q3 6.500 0 12Z" fill="url(#edgeTop)" />
                    <path d="M10 10Q6 18 12 22Q18 23 22 19Q17 21 13 18Q9 15 10 10Z" fill="#0c3f86" />
                </svg>
            </button>
            <button aria-label="File Explorer" className="flex h-full w-[58px] items-center justify-center">
                <svg width="22" height="18" viewBox="0 0 22 18"><path d="M0 0H8L10 2H21V5H0Z" fill="#e8a92c" /><path d="M0 3H22V18H0Z" fill="#fbd664" /><path d="M4 18V11Q4 9 6 9H16Q18 9 18 11V18H14V14H8V18Z" fill="#3a97d8" /></svg>
            </button>
            <button aria-label="Firefox" className="flex h-full w-10 items-center justify-center">
                <svg width="24" height="24" viewBox="0 0 24 24">
                    <path d="M2 7 4 3 6 6Q8 5 10 5Q12 3 15 0Q16 4 19 5L20 4Q24 8 23.500 13Q22 23.500 12 24Q1 23 .5 13Q.5 9 2 7Z" fill="url(#fox)" />
                    <circle cx="12.500" cy="12.500" r="5.500" fill="#7b3fd6" />
                    <path d="M5 9Q9 7 13 10Q11 12 9 12Q9 17 15 16Q19 14 18 9Q20 18 13 19Q6 19 5 9Z" fill="#ff9a2b" />
                </svg>
            </button>
            <button aria-label="WinRAR" className="ml-[5px] flex h-full w-12 items-center justify-center border-b-2 border-[#76b9ed] bg-[#35464f]"><RarIcon size={24} /></button>
            <div className="ml-auto flex h-full items-center pr-1">
                <button aria-label="Show hidden icons" className="flex w-6 justify-center"><Line d="M3 13.500 10 6.500 17 13.500" size={16} w={1.6} /></button>
                <button aria-label="Meet now" className="flex w-6 justify-center"><Line d="M4.500 6.500H12.500V14H4.500ZM12.500 9 16 7.500V13L12.500 11.500M5 3.500Q9 0 13 3.500M5 17Q9 20 13 17" size={17} w={1.4} /></button>
                <button aria-label="Volume" className="flex w-6 justify-center"><Line d="M1 7.500H4L8 4V16L4 12.500H1ZM11 8Q12.500 10 11 12M13.500 6Q16.500 10 13.500 14M16 4Q21 10 16 16" size={17} w={1.4} /></button>
                <button aria-label="Network" className="flex w-6 justify-center"><Line d="M7 5H18.500V13.500H4.500V9M11.500 13.500V17M8 17H15M1.500 3H6V7.500H1.500ZM3.700 7.500V17" size={17} w={1.4} /></button>
                <button className="w-[62px] text-center text-[11px] leading-[18px]">
                    <span className="block">7:34 AM</span>
                    <span className="block">4/4/2026</span>
                </button>
                <button aria-label="Notifications" className="flex w-11 justify-center"><Line d="M2 3H18V15.500H13L10 18 7.500 15.500H2Z" size={18} w={1.3} /></button>
                <div className="ml-1.5 h-full w-px bg-[#4a5560]" />
            </div>
        </footer>
    )
}

export default function App() {
    return (
        <div className="relative flex h-screen flex-col overflow-hidden bg-[#f2f2f2] font-['Open_Sans',sans-serif] text-[11px] leading-4">
            <Defs />
            <TabStrip />
            <BrowserBar />
            <WebPage />
            <DownloadsFlyout />
            <ArchiveWindow />
            <Watermark />
            <Taskbar />
        </div>
    )
}
